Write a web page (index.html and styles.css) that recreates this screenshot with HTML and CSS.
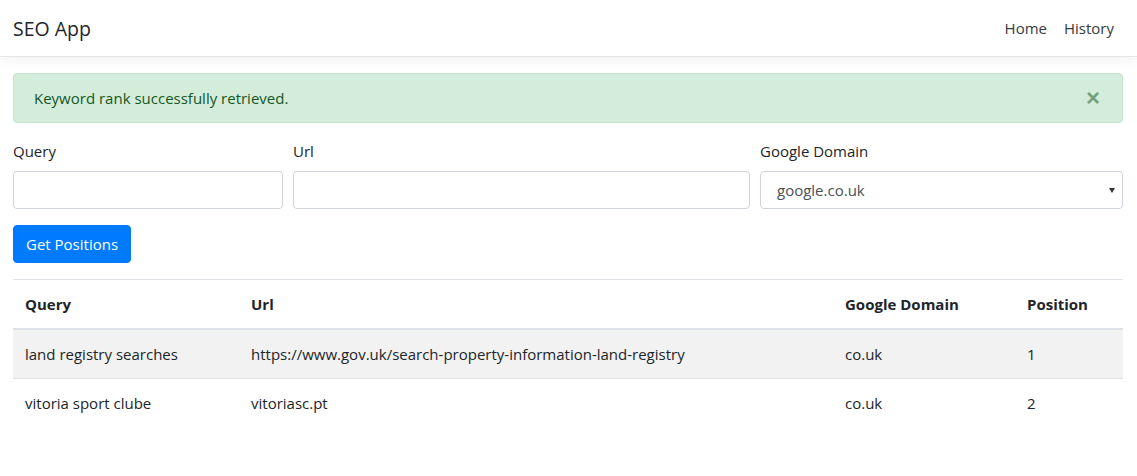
FILE: index.html
```html
<!DOCTYPE html>
<html lang="en">
<head>
<meta charset="utf-8">
<title>SEO App</title>
<link rel="stylesheet" href="styles.css">
</head>
<body>
<header class="navbar">
  <a class="brand" href="#">SEO App</a>
  <nav class="nav">
    <a class="nav-link" href="#">Home</a>
    <a class="nav-link" href="#">History</a>
  </nav>
</header>
<main class="container">
  <div class="alert">
    <span>Keyword rank successfully retrieved.</span>
    <button class="close" type="button" aria-label="Close">&times;</button>
  </div>
  <form class="form">
    <div class="form-row">
      <div class="field field-query">
        <label class="label">Query</label>
        <input class="input" type="text">
      </div>
      <div class="field field-url">
        <label class="label">Url</label>
        <input class="input" type="text">
      </div>
      <div class="field field-domain">
        <label class="label">Google Domain</label>
        <div class="select-wrap">
          <select class="input select">
            <option>google.co.uk</option>
          </select>
        </div>
      </div>
    </div>
    <button class="btn" type="button">Get Positions</button>
  </form>
  <table class="table">
    <thead>
      <tr>
        <th class="c-query">Query</th>
        <th class="c-url">Url</th>
        <th class="c-domain">Google Domain</th>
        <th class="c-pos">Position</th>
      </tr>
    </thead>
    <tbody>
      <tr class="striped">
        <td>land registry searches</td>
        <td>https://www.gov.uk/search-property-information-land-registry</td>
        <td>co.uk</td>
        <td>1</td>
      </tr>
      <tr>
        <td>vitoria sport clube</td>
        <td>vitoriasc.pt</td>
        <td>co.uk</td>
        <td>2</td>
      </tr>
    </tbody>
  </table>
</main>
</body>
</html>
```
FILE: styles.css
```css
* { box-sizing: border-box; }
html, body { margin: 0; padding: 0; }
body {
  font-family: "Open Sans", "Noto Sans", sans-serif;
  font-size: 15px;
  line-height: 24px;
  color: #212529;
  background: #fff;
}
a { text-decoration: none; }

.navbar {
  height: 57px;
  display: flex;
  align-items: center;
  justify-content: space-between;
  padding: 0 13px;
  border-bottom: 1px solid #e5e5e5;
  box-shadow: 0 4px 12px rgba(0,0,0,.05);
  margin-bottom: 16px;
}
.brand {
  font-size: 19.5px;
  color: #212529;
  line-height: 30px;
  padding-top: 1px;
}
.nav { display: flex; gap: 1px; margin-right: 2px; }
.nav-link {
  color: #343a40;
  padding: 0 8px;
  font-size: 15px;
}

.container { padding: 0 14px 0 13px; }

.alert {
  display: flex;
  align-items: center;
  justify-content: space-between;
  height: 50px;
  padding: 0 20px;
  background: #d4edda;
  border: 1px solid #c3e6cb;
  border-radius: 4px;
  color: #155724;
  margin-bottom: 16px;
}
.close {
  background: none;
  border: 0;
  padding: 0;
  margin-right: 2px;
  font-family: "Liberation Sans", sans-serif;
  font-size: 24px;
  font-weight: 700;
  color: #155724;
  opacity: .5;
  line-height: 1;
}

.form-row { display: flex; gap: 10px; }
.field { display: flex; flex-direction: column; }
.field-query { width: 270px; }
.field-url { width: 457px; }
.field-domain { flex: 1; }
.label {
  line-height: 24px;
  margin-bottom: 8px;
}
.input {
  height: 38px;
  width: 100%;
  border: 1px solid #ced4da;
  border-radius: 4px;
  padding: 6px 12px;
  font: inherit;
  color: #495057;
  background: #fff;
}
.select-wrap { position: relative; }
.select {
  appearance: none;
  -webkit-appearance: none;
  padding-left: 16px;
}
.select-wrap::after {
  content: "";
  position: absolute;
  right: 8px;
  top: 17px;
  border-left: 3px solid transparent;
  border-right: 3px solid transparent;
  border-top: 5px solid #333;
}
.btn {
  margin-top: 16px;
  height: 38px;
  padding: 0 12px;
  background: #007bff;
  border: 1px solid #007bff;
  border-radius: 4px;
  color: #fff;
  font: inherit;
  display: block;
}

.table {
  width: 100%;
  margin-top: 16px;
  border-collapse: collapse;
}
.table th, .table td {
  text-align: left;
  padding: 12px;
  line-height: 24px;
  border-top: 1px solid #dee2e6;
  vertical-align: top;
}
.table th { font-weight: 700; border-bottom: 2px solid #dee2e6; padding-top: 12px; padding-bottom: 12px; }
.table td { border-bottom: 1px solid #dee2e6; }
.table tbody tr:last-child td { border-bottom: 0; }
.striped td { background: #f2f2f2; }
.c-query { width: 226px; }
.c-url { width: 594px; }
.c-domain { width: 182px; }
.c-pos { width: 108px; }
```
